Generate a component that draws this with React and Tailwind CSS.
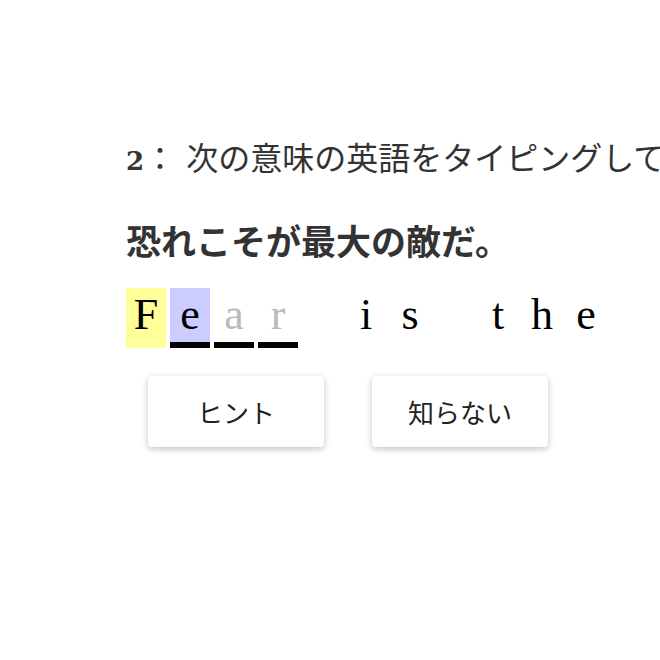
export default function App() {
  const word = "Fear is the greatest enemy.".split("");
  return (
    <div className="min-h-screen w-full overflow-hidden bg-white">
      <div className="pl-[126px] pt-[137px]">
        <p
          className="whitespace-nowrap text-[32px] leading-[44px] text-[#333]"
          style={{ fontFamily: '"DejaVu Serif", "Noto Sans CJK JP", serif' }}
        >
          <span className="text-[26px] font-bold">2</span>：&nbsp;次の意味の英語をタイピングしてください。
        </p>
        <p
          className="mt-[31px] whitespace-nowrap text-[35px] font-bold leading-[52px] text-[#333]"
          style={{ fontFamily: '"Noto Sans CJK JP", sans-serif' }}
        >
          恐れこそが最大の敵だ。
        </p>
        <div
          className="mt-[22px] flex gap-1 whitespace-nowrap text-[44px] leading-[54px]"
          style={{ fontFamily: '"Liberation Serif", serif' }}
        >
          {word.map((c, i) => {
            let cls = "border-transparent text-black";
            if (i === 0) cls = "border-transparent bg-[#ffff99] text-black";
            if (i === 1) cls = "border-black bg-[#ccccff] text-black";
            if (i === 2 || i === 3) cls = "border-black text-[#bbbbbb]";
            return (
              <span
                key={i}
                className={`flex h-[60px] w-10 shrink-0 justify-center border-b-[6px] ${cls}`}
              >
                {c === " " ? "\u00a0" : c}
              </span>
            );
          })}
        </div>
        <div
          className="mt-7 flex gap-12 pl-[22px]"
          style={{ fontFamily: '"Noto Sans CJK JP", sans-serif' }}
        >
          <button className="flex h-[71px] w-[176px] items-center justify-center rounded bg-white text-[26px] text-[#222] shadow-[0_2px_6px_rgba(0,0,0,0.25)]">
            ヒント
          </button>
          <button className="flex h-[71px] w-[176px] items-center justify-center rounded bg-white text-[26px] text-[#222] shadow-[0_2px_6px_rgba(0,0,0,0.25)]">
            知らない
          </button>
        </div>
      </div>
    </div>
  );
}
